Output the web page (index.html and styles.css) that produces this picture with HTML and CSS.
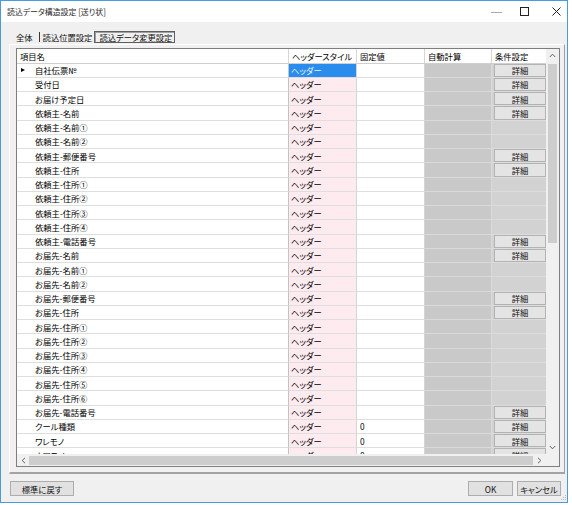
FILE: index.html
```html
<!DOCTYPE html>
<html lang="ja">
<head>
<meta charset="utf-8">
<title>読込データ構造設定 [送り状]</title>
<link rel="stylesheet" href="styles.css">
</head>
<body>
<div class="window">
  <div class="titlebar">
    <div class="title">読込データ構造設定 [送り状]</div>
    <div class="ctl">
      <svg class="ic-min" width="11" height="3" viewBox="0 0 11 3"><line x1="0" y1="1.5" x2="11" y2="1.5" stroke="#a8a8a8" stroke-width="1"/></svg>
      <svg class="ic-max" width="9" height="9" viewBox="0 0 9 9"><rect x="0.5" y="0.5" width="8" height="8" fill="none" stroke="#222" stroke-width="1"/></svg>
      <svg class="ic-close" width="9" height="9" viewBox="0 0 9 9"><path d="M0.5 0.5 L8.5 8.5 M8.5 0.5 L0.5 8.5" stroke="#222" stroke-width="1" fill="none"/></svg>
    </div>
  </div>

  <div class="tabs">
    <div class="tab t1">全体</div>
    <div class="tab-sep"></div>
    <div class="tab t2">読込位置設定</div>
    <div class="tab sel">読込データ変更設定</div>
  </div>

  <div class="panel">
    <div class="grid">
      <div class="gmain">
        <div class="table">
          <div class="h hname">項目名</div><div class="h">ヘッダースタイル</div><div class="h">固定値</div><div class="h">自動計算</div><div class="h hlast">条件設定</div>

          <div class="c name cur">自社伝票№</div><div class="c hs selc">ヘッダー</div><div class="c fx"></div><div class="c auto"></div><div class="c cond"><span class="btn">詳細</span></div>
          <div class="c name">受付日</div><div class="c hs">ヘッダー</div><div class="c fx"></div><div class="c auto"></div><div class="c cond"><span class="btn">詳細</span></div>
          <div class="c name">お届け予定日</div><div class="c hs">ヘッダー</div><div class="c fx"></div><div class="c auto"></div><div class="c cond"><span class="btn">詳細</span></div>
          <div class="c name">依頼主-名前</div><div class="c hs">ヘッダー</div><div class="c fx"></div><div class="c auto"></div><div class="c cond"><span class="btn">詳細</span></div>
          <div class="c name">依頼主-名前①</div><div class="c hs">ヘッダー</div><div class="c fx"></div><div class="c auto"></div><div class="c cond"></div>
          <div class="c name">依頼主-名前②</div><div class="c hs">ヘッダー</div><div class="c fx"></div><div class="c auto"></div><div class="c cond"></div>
          <div class="c name">依頼主-郵便番号</div><div class="c hs">ヘッダー</div><div class="c fx"></div><div class="c auto"></div><div class="c cond"><span class="btn">詳細</span></div>
          <div class="c name">依頼主-住所</div><div class="c hs">ヘッダー</div><div class="c fx"></div><div class="c auto"></div><div class="c cond"><span class="btn">詳細</span></div>
          <div class="c name">依頼主-住所①</div><div class="c hs">ヘッダー</div><div class="c fx"></div><div class="c auto"></div><div class="c cond"></div>
          <div class="c name">依頼主-住所②</div><div class="c hs">ヘッダー</div><div class="c fx"></div><div class="c auto"></div><div class="c cond"></div>
          <div class="c name">依頼主-住所③</div><div class="c hs">ヘッダー</div><div class="c fx"></div><div class="c auto"></div><div class="c cond"></div>
          <div class="c name">依頼主-住所④</div><div class="c hs">ヘッダー</div><div class="c fx"></div><div class="c auto"></div><div class="c cond"></div>
          <div class="c name">依頼主-電話番号</div><div class="c hs">ヘッダー</div><div class="c fx"></div><div class="c auto"></div><div class="c cond"><span class="btn">詳細</span></div>
          <div class="c name">お届先-名前</div><div class="c hs">ヘッダー</div><div class="c fx"></div><div class="c auto"></div><div class="c cond"><span class="btn">詳細</span></div>
          <div class="c name">お届先-名前①</div><div class="c hs">ヘッダー</div><div class="c fx"></div><div class="c auto"></div><div class="c cond"></div>
          <div class="c name">お届先-名前②</div><div class="c hs">ヘッダー</div><div class="c fx"></div><div class="c auto"></div><div class="c cond"></div>
          <div class="c name">お届先-郵便番号</div><div class="c hs">ヘッダー</div><div class="c fx"></div><div class="c auto"></div><div class="c cond"><span class="btn">詳細</span></div>
          <div class="c name">お届先-住所</div><div class="c hs">ヘッダー</div><div class="c fx"></div><div class="c auto"></div><div class="c cond"><span class="btn">詳細</span></div>
          <div class="c name">お届先-住所①</div><div class="c hs">ヘッダー</div><div class="c fx"></div><div class="c auto"></div><div class="c cond"></div>
          <div class="c name">お届先-住所②</div><div class="c hs">ヘッダー</div><div class="c fx"></div><div class="c auto"></div><div class="c cond"></div>
          <div class="c name">お届先-住所③</div><div class="c hs">ヘッダー</div><div class="c fx"></div><div class="c auto"></div><div class="c cond"></div>
          <div class="c name">お届先-住所④</div><div class="c hs">ヘッダー</div><div class="c fx"></div><div class="c auto"></div><div class="c cond"></div>
          <div class="c name">お届先-住所⑤</div><div class="c hs">ヘッダー</div><div class="c fx"></div><div class="c auto"></div><div class="c cond"></div>
          <div class="c name">お届先-住所⑥</div><div class="c hs">ヘッダー</div><div class="c fx"></div><div class="c auto"></div><div class="c cond"></div>
          <div class="c name">お届先-電話番号</div><div class="c hs">ヘッダー</div><div class="c fx"></div><div class="c auto"></div><div class="c cond"><span class="btn">詳細</span></div>
          <div class="c name">クール種類</div><div class="c hs">ヘッダー</div><div class="c fx">0</div><div class="c auto"></div><div class="c cond"><span class="btn">詳細</span></div>
          <div class="c name">ワレモノ</div><div class="c hs">ヘッダー</div><div class="c fx">0</div><div class="c auto"></div><div class="c cond"><span class="btn">詳細</span></div>
          <div class="c name">ナマモノ</div><div class="c hs">ヘッダー</div><div class="c fx">0</div><div class="c auto"></div><div class="c cond"><span class="btn">詳細</span></div>
        </div>
        <div class="vscroll">
          <div class="arrow"><svg width="7" height="5" viewBox="0 0 7 5"><polyline points="0.8,4 3.5,1.2 6.2,4" fill="none" stroke="#606060" stroke-width="1"/></svg></div>
          <div class="vthumb"></div>
          <div class="vspace"></div>
          <div class="arrow"><svg width="7" height="5" viewBox="0 0 7 5"><polyline points="0.8,1 3.5,3.8 6.2,1" fill="none" stroke="#606060" stroke-width="1"/></svg></div>
        </div>
      </div>
      <div class="hrow">
        <div class="hscroll">
          <div class="harrow"><svg width="5" height="7" viewBox="0 0 5 7"><polyline points="4,0.8 1.2,3.5 4,6.2" fill="none" stroke="#606060" stroke-width="1"/></svg></div>
          <div class="hthumb"></div>
          <div class="harrow hr"><svg width="5" height="7" viewBox="0 0 5 7"><polyline points="1,0.8 3.8,3.5 1,6.2" fill="none" stroke="#606060" stroke-width="1"/></svg></div>
        </div>
        <div class="corner"></div>
      </div>
    </div>
  </div>

  <div class="footer">
    <div class="button b-reset">標準に戻す</div>
    <div class="spacer"></div>
    <div class="button b-ok">OK</div>
    <div class="button b-cancel">キャンセル</div>
    <svg class="grip" width="6" height="6" viewBox="0 0 6 6">
      <rect x="4" y="0" width="1" height="1" fill="#b8b8b8"/>
      <rect x="2" y="2" width="1" height="1" fill="#b8b8b8"/>
      <rect x="4" y="2" width="1" height="1" fill="#b8b8b8"/>
      <rect x="0" y="4" width="1" height="1" fill="#b8b8b8"/>
      <rect x="2" y="4" width="1" height="1" fill="#b8b8b8"/>
      <rect x="4" y="4" width="1" height="1" fill="#b8b8b8"/>
    </svg>
  </div>
</div>
</body>
</html>
```
FILE: styles.css
```css
html, body {
  margin: 0;
  padding: 0;
  background: #ffffff;
}

body {
  font-family: "Noto Sans CJK JP", "Noto Sans", sans-serif;
  font-size: 8.3px;
  font-feature-settings: "palt" 1;
  color: #000;
}

.window {
  width: 568px;
  height: 503px;
  box-sizing: border-box;
  border: 1px solid #4a9ae0;
  background: #f0f0f0;
  display: flex;
  flex-direction: column;
}

/* title bar */
.titlebar {
  flex: none;
  height: 21px;
  background: #ffffff;
  display: flex;
  align-items: center;
  padding-left: 6px;
}

.title {
  flex: 1;
  font-size: 7.9px;
  color: #2a2a2a;
  white-space: nowrap;
}

.ctl {
  display: flex;
  align-items: center;
  padding-right: 6px;
}

.ic-min { display: block; margin-right: 18px; margin-top: 1px; }
.ic-max { display: block; margin-right: 23px; }
.ic-close { display: block; }

/* tabs */
.tabs {
  flex: none;
  height: 22px;
  box-sizing: border-box;
  display: flex;
  align-items: flex-end;
  padding: 0 0 1px 15px;
}

.tab {
  height: 12px;
  line-height: 10px;
  display: flex;
  align-items: center;
  white-space: nowrap;
  color: #111;
}

.tab-sep {
  width: 1px;
  height: 10px;
  background: #3a3a3a;
  margin: 0 0 1px 6px;
}

.t2 { margin-left: 3px; }

.tab.sel {
  margin-left: 2px;
  box-sizing: border-box;
  border: 1px solid #5f5f5f;
  box-shadow: inset 1px 1px 0 #a0a0a0;
  padding: 0 2px 0 4px;
}

/* panel */
.panel {
  flex: none;
  height: 430px;
  box-sizing: border-box;
  margin: 0 2px 0 8px;
  border-left: 1px solid #ffffff;
  border-top: 1px solid #ffffff;
  border-right: 1px solid #a0a0a0;
  border-bottom: 2px solid #a3a3a3;
  padding: 3px 3px 5px 6px;
}

/* grid */
.grid {
  width: 544px;
  height: 419px;
  box-sizing: border-box;
  border: 1px solid #7e7e7e;
  background: #ffffff;
  display: flex;
  flex-direction: column;
}

.gmain {
  display: flex;
  height: 405px;
  flex: none;
}

.table {
  width: 529px;
  overflow: hidden;
  display: grid;
  grid-template-columns: 272px 68px 68px 67px 54px;
  grid-template-rows: 14.5px;
  grid-auto-rows: 14.25px;
  align-content: start;
}

.h {
  box-sizing: border-box;
  background: #ffffff;
  border-bottom: 1px solid #cfcfcf;
  border-right: 1px solid #d6d6d6;
  display: flex;
  align-items: center;
  padding-left: 3px;
  white-space: nowrap;
  overflow: hidden;
}

.hname { padding-left: 3px; }
.hlast { border-right: none; }

.c {
  box-sizing: border-box;
  border-bottom: 1px solid #dedede;
  border-right: 1px solid #dedede;
  display: flex;
  align-items: center;
  white-space: nowrap;
  overflow: hidden;
}

.name {
  padding-left: 18px;
  border-right-color: #c4c4c4;
}

.name.cur { padding-left: 4px; }

.name.cur::before {
  content: "";
  width: 0;
  height: 0;
  border-left: 4px solid #000;
  border-top: 2.5px solid transparent;
  border-bottom: 2.5px solid transparent;
  margin-right: 10px;
}

.hs {
  background: #fdebf0;
  padding-left: 2px;
  border-right-color: #d4d4d4;
}

.hs.selc {
  background: #2a8cec;
  color: #eaf4ff;
}

.fx {
  padding-left: 3px;
  border-right-color: #d4d4d4;
}

.auto {
  background: #c9c9c9;
  border-bottom-color: #dadada;
  border-right-color: #dadada;
}

.cond {
  background: #d2d2d2;
  border-bottom-color: #dcdcdc;
  border-right: none;
  padding: 0 0 0 2px;
}

.btn {
  flex: 1;
  height: 100%;
  box-sizing: border-box;
  background: #e4e4e4;
  border: 1px solid #b3b3b3;
  display: flex;
  align-items: center;
  justify-content: center;
  color: #111;
}

/* vertical scroll */
.vscroll {
  width: 13px;
  background: #f0f0f0;
  display: flex;
  flex-direction: column;
  align-items: center;
}

.arrow {
  height: 13px;
  flex: none;
  display: flex;
  align-items: center;
  justify-content: center;
}

.vthumb {
  flex: none;
  width: 9px;
  height: 179px;
  margin-top: 2px;
  background: #cdcdcd;
}

.vspace { flex: 1; }

/* horizontal scroll */
.hrow {
  flex: 1;
  display: flex;
}

.hscroll {
  width: 529px;
  background: #f0f0f0;
  display: flex;
  align-items: center;
}

.harrow {
  width: 12px;
  height: 100%;
  display: flex;
  align-items: center;
  justify-content: center;
}

.harrow.hr { width: 13px; }

.hthumb {
  flex: 1;
  height: 9px;
  background: #cdcdcd;
}

.corner {
  flex: 1;
  background: #f0f0f0;
}

/* footer */
.footer {
  flex: 1;
  display: flex;
  align-items: flex-start;
  padding: 7px 0 0 9px;
}

.button {
  height: 15px;
  box-sizing: border-box;
  background: #e1e1e1;
  border: 1px solid #adadad;
  display: flex;
  align-items: center;
  justify-content: center;
  color: #111;
  white-space: nowrap;
}

.b-reset { width: 64px; }
.spacer { flex: 1; }
.b-ok { width: 45px; }
.b-cancel { width: 44px; margin-left: 4px; }

.grip {
  align-self: flex-end;
  margin-bottom: 1px;
  display: block;
}
```
